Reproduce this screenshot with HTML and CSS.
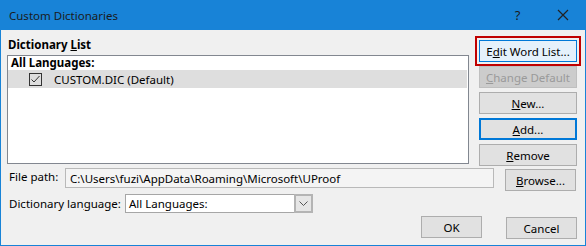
FILE: index.html
```html
<!DOCTYPE html>
<html lang="en">
<head>
    <meta charset="UTF-8">
    <meta name="viewport" content="width=device-width, initial-scale=1.0">
    <title>Custom Dictionaries</title>
    <link rel="stylesheet" href="styles.css">
</head>
<body>
    <div class="window">
        <div class="titlebar">
            <span class="title">Custom Dictionaries</span>
            <span class="title-btn help">?</span>
            <span class="title-btn close">
                <svg width="12" height="12" viewBox="0 0 12 12">
                    <path d="M1 1 L11 11 M11 1 L1 11" stroke="#222" stroke-width="1.2" fill="none"/>
                </svg>
            </span>
        </div>

        <div class="dialog">
            <div class="main">
                <div class="list-col">
                    <div class="group-label">Dictionary <u>L</u>ist</div>
                    <div class="listbox">
                        <div class="list-heading">All Languages:</div>
                        <div class="list-item">
                            <svg class="check" width="13" height="13" viewBox="0 0 13 13">
                                <rect x="0.5" y="0.5" width="12" height="12" fill="none" stroke="#333"/>
                                <path d="M2.5 6.5 L5 9 L10.5 3" stroke="#333" stroke-width="1" fill="none"/>
                            </svg>
                            <span>CUSTOM.DIC (Default)</span>
                        </div>
                    </div>
                </div>
                <div class="btn-col">
                    <button class="btn btn-focus">E<u>d</u>it Word List...</button>
                    <button class="btn" disabled><u>C</u>hange Default</button>
                    <button class="btn"><u>N</u>ew...</button>
                    <button class="btn btn-default"><u>A</u>dd...</button>
                    <button class="btn"><u>R</u>emove</button>
                </div>
            </div>

            <div class="row path-row">
                <label class="path-label" for="path">File path:</label>
                <input class="path-input" id="path" type="text" readonly value="C:\Users\fuzi\AppData\Roaming\Microsoft\UProof">
                <button class="btn btn-side"><u>B</u>rowse...</button>
            </div>

            <div class="row lang-row">
                <span class="lang-label">Dictionary lan<u>g</u>uage:</span>
                <div class="combo">
                    <span class="combo-value">All Languages:</span>
                    <span class="combo-arrow">
                        <svg width="9" height="5" viewBox="0 0 9 5">
                            <path d="M0.5 0.5 L4.5 4.5 L8.5 0.5" stroke="#555" fill="none"/>
                        </svg>
                    </span>
                </div>
            </div>

            <div class="footer">
                <button class="btn btn-ok">OK</button>
                <button class="btn btn-side">Cancel</button>
            </div>
        </div>
    </div>
</body>
</html>
```

FILE: styles.css
```css
body {
    margin: 0;
    font-family: "Noto Sans", "Liberation Sans", sans-serif;
    font-size: 11.5px;
    color: #000;
}

.window {
    width: 586px;
    height: 246px;
    box-sizing: border-box;
    border: 1px solid #1883d7;
    border-top: none;
    background-color: #f0f0f0;
}

.titlebar {
    height: 30px;
    margin: 0 -1px;
    background-color: #1883d7;
    display: flex;
    align-items: center;
}

.title {
    flex: 1;
    padding-left: 9px;
    font-size: 11.5px;
    color: #1b1b1b;
}

.title-btn {
    width: 45px;
    display: flex;
    justify-content: center;
    align-items: center;
}

.help {
    font-size: 13px;
    color: #1b1b1b;
}

.close {
    width: 46px;
}

.dialog {
    padding: 7px 8px 0 6px;
}

.main {
    display: flex;
    gap: 10px;
}

.list-col {
    width: 462px;
}

.group-label {
    font-weight: bold;
    line-height: 16px;
    padding-left: 1px;
    margin-bottom: 2px;
}

.listbox {
    height: 109px;
    box-sizing: border-box;
    border: 1px solid #828790;
    background-color: #fff;
}

.list-heading {
    font-weight: bold;
    line-height: 14px;
    padding: 0 0 0 3px;
}

.list-item {
    height: 18px;
    background-color: #dedede;
    margin-right: 1px;
    display: flex;
    align-items: center;
}

.check {
    margin-left: 21px;
    margin-right: 12px;
}

.btn-col {
    width: 98px;
    padding-top: 3px;
    display: flex;
    flex-direction: column;
    gap: 4px;
}

.btn {
    height: 22px;
    padding: 0;
    box-sizing: border-box;
    border: 1px solid #adadad;
    background-color: #e1e1e1;
    font-family: inherit;
    font-size: 11.5px;
    color: #000;
}

.btn-focus {
    background-color: #e5f1fb;
    border-color: #0078d7;
    outline: 2px solid #c00000;
    outline-offset: 2px;
}

.btn:disabled {
    background-color: #cccccc;
    border-color: #bfbfbf;
    color: #9a9a9a;
}

.btn-default {
    border: 2px solid #0078d7;
}

.row {
    display: flex;
    align-items: flex-start;
}

.path-row {
    margin-top: 2px;
}

.path-label {
    width: 58px;
    padding-left: 2px;
    box-sizing: border-box;
    line-height: 18px;
}

.path-input {
    width: 429px;
    height: 20px;
    box-sizing: border-box;
    margin: 0 11px 0 0;
    padding: 0 4px;
    border: 1px solid #b9b9b9;
    background-color: #f4f4f4;
    font-family: inherit;
    font-size: 11.5px;
    color: #000;
}

.btn-side {
    width: 71px;
    margin-top: 1px;
}

.lang-row {
    margin-top: 3px;
}

.lang-label {
    width: 118px;
    padding-left: 2px;
    box-sizing: border-box;
    line-height: 19px;
}

.combo {
    width: 188px;
    height: 19px;
    box-sizing: border-box;
    border: 1px solid #a6a6a6;
    background-color: #fff;
    display: flex;
}

.combo-value {
    flex: 1;
    padding-left: 3px;
    line-height: 17px;
}

.combo-arrow {
    width: 19px;
    box-sizing: border-box;
    border: 2px solid #b4b4b4;
    margin: -1px -1px -1px 0;
    background-color: #e6e6e6;
    display: flex;
    justify-content: center;
    align-items: center;
}

.footer {
    margin-top: 3px;
    display: flex;
    justify-content: flex-end;
    gap: 24px;
}

.btn-ok {
    width: 61px;
}
```
